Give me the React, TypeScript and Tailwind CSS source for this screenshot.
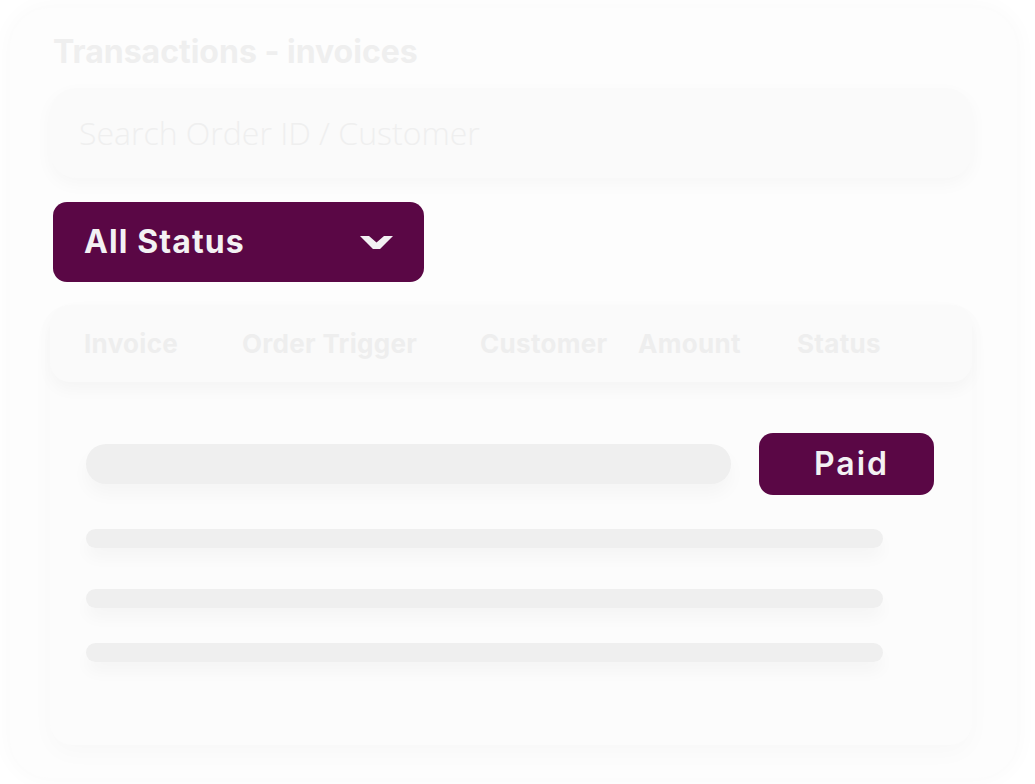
import React from 'react';

const columns = ['Invoice', 'Order Trigger', 'Customer', 'Amount', 'Status'];

const ChevronDown: React.FC = () => (
  <svg width="33" height="13" viewBox="0 0 33 13" className="block">
    <path d="M0 0 H9 L16.5 6.5 L24 0 H33 L20 13 H13 Z" fill="#f3f1f3" />
  </svg>
);

const App: React.FC = () => {
  return (
    <div className="w-[1035px] h-[784px] bg-white pl-[10px] pt-[8px] pr-[18px] pb-[6px] font-['Inter',sans-serif]">
      <div className="h-full rounded-[40px] bg-[#fdfdfd] shadow-[0_0_24px_rgba(0,0,0,0.03)] pl-[40px] pr-[45px] pt-[26px]">
        {/* title */}
        <h1 className="ml-[3px] text-[32px] leading-[36px] font-bold text-[#efefef]">
          Transactions - invoices
        </h1>

        {/* search */}
        <div className="mt-[18px] h-[90px] rounded-[26px] bg-[#fafafa] shadow-[0_6px_18px_rgba(0,0,0,0.03)] flex items-center pl-[29px]">
          <span className="font-['Open_Sans',sans-serif] font-light text-[32px] text-[#efefef]">
            Search Order ID / Customer
          </span>
        </div>

        {/* status dropdown */}
        <div className="mt-[24px] ml-[3px] w-[371px] h-[80px] rounded-[14px] bg-[#5a0745] flex items-center justify-between pl-[31px] pr-[31px]">
          <span className="text-[32px] font-bold text-[#f3f1f3] tracking-[1.1px]">All Status</span>
          <ChevronDown />
        </div>

        {/* table */}
        <div className="mt-[23px] h-[440px] rounded-[22px] bg-[#fcfcfc] shadow-[0_8px_24px_rgba(0,0,0,0.025)]">
          <div className="h-[77px] rounded-[20px] bg-[#fafafa] shadow-[0_8px_16px_rgba(0,0,0,0.03)] grid grid-cols-[158px_238px_158px_159px_1fr] items-center pl-[34px]">
            {columns.map((c) => (
              <span key={c} className="text-[26px] font-bold text-[#eeeeee] leading-none tracking-[0.3px]">
                {c}
              </span>
            ))}
          </div>

          <div className="pl-[36px] pt-[51px]">
            <div className="flex items-center">
              <div className="w-[645px] h-[40px] rounded-full bg-[#efefef] shadow-[0_10px_18px_rgba(0,0,0,0.03)]" />
              <div className="ml-[28px] w-[175px] h-[62px] rounded-[14px] bg-[#5a0745] flex items-center justify-center pl-[10px]">
                <span className="text-[32px] font-semibold text-[#f3f1f3] tracking-[2px]">Paid</span>
              </div>
            </div>

            <div className="mt-[34px] w-[797px] h-[19px] rounded-full bg-[#efefef] shadow-[0_10px_16px_rgba(0,0,0,0.03)]" />
            <div className="mt-[41px] w-[797px] h-[19px] rounded-full bg-[#efefef] shadow-[0_10px_16px_rgba(0,0,0,0.03)]" />
            <div className="mt-[35px] w-[797px] h-[19px] rounded-full bg-[#efefef] shadow-[0_10px_16px_rgba(0,0,0,0.03)]" />
          </div>
        </div>
      </div>
    </div>
  );
};

export default App;
